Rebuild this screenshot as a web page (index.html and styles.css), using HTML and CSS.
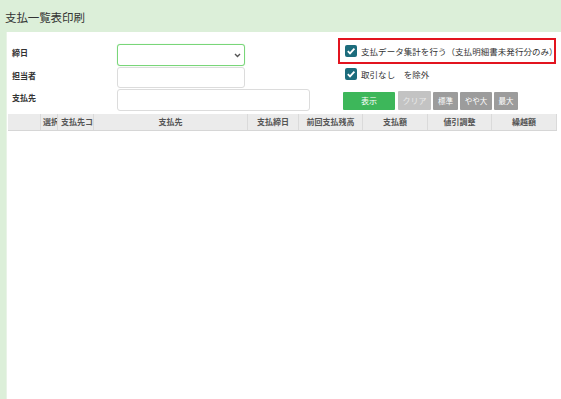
FILE: index.html
```html
<!DOCTYPE html>
<html lang="ja">
<head>
<meta charset="utf-8">
<title>支払一覧表印刷</title>
<link rel="stylesheet" href="styles.css">
</head>
<body>
<div class="page">
  <h1 class="title">支払一覧表印刷</h1>
  <div class="panel">
    <div class="top">
      <div class="form">
        <div class="row">
          <label class="lbl">締日</label>
          <div class="select">
            <svg class="chev" width="7" height="5" viewBox="0 0 7 5"><path d="M1 1 L3.5 3.5 L6 1" fill="none" stroke="#555" stroke-width="1.4"/></svg>
          </div>
        </div>
        <div class="row">
          <label class="lbl">担当者</label>
          <div class="input"></div>
        </div>
        <div class="row">
          <label class="lbl">支払先</label>
          <div class="input wide"></div>
        </div>
      </div>
      <div class="side">
        <div class="redbox">
          <div class="chk">
            <span class="box"><svg width="12" height="12" viewBox="0 0 12 12"><path d="M2.8 6.2 L5 8.4 L9.4 3.6" fill="none" stroke="#fff" stroke-width="1.8"/></svg></span>
            <span class="ctext">支払データ集計を行う（支払明細書未発行分のみ）</span>
          </div>
        </div>
        <div class="chk second">
          <span class="box"><svg width="12" height="12" viewBox="0 0 12 12"><path d="M2.8 6.2 L5 8.4 L9.4 3.6" fill="none" stroke="#fff" stroke-width="1.8"/></svg></span>
          <span class="ctext">取引なし　を除外</span>
        </div>
        <div class="buttons">
          <button class="btn show">表示</button>
          <button class="btn clear">クリア</button>
          <button class="btn size s1">標準</button>
          <button class="btn size s2">やや大</button>
          <button class="btn size s3">最大</button>
        </div>
      </div>
    </div>
    <div class="thead">
      <div class="th c0"></div>
      <div class="th c1 left">選択</div>
      <div class="th c2 left">支払先コード</div>
      <div class="th c3">支払先</div>
      <div class="th c4">支払締日</div>
      <div class="th c5">前回支払残高</div>
      <div class="th c6">支払額</div>
      <div class="th c7">値引調整</div>
      <div class="th c8">繰越額</div>
    </div>
  </div>
</div>
</body>
</html>
```
FILE: styles.css
```css
html, body {
  margin: 0;
  padding: 0;
  height: 100%;
}
body {
  background: #dcefd9;
  font-family: "Noto Sans CJK JP", "Noto Sans", sans-serif;
  color: #333;
}
.page {
  display: flex;
  flex-direction: column;
  height: 399px;
  overflow: hidden;
}
.title {
  margin: 0;
  height: 32px;
  box-sizing: border-box;
  padding: 10px 0 0 5px;
  font-size: 11.5px;
  font-weight: normal;
  line-height: 15px;
  color: #333;
  letter-spacing: -0.1px;
}
.panel {
  flex: 1;
  margin-left: 6px;
  background: #fff;
  border-left: 1px solid #e8f3e6;
}
.top {
  display: flex;
  height: 82px;
}
.form {
  width: 320px;
  padding-top: 12px;
  display: flex;
  flex-direction: column;
  gap: 1px;
}
.row {
  display: flex;
  align-items: center;
}
.lbl {
  width: 105px;
  padding-left: 5px;
  font-size: 8px;
  font-weight: bold;
  color: #333;
  align-self: flex-start;
  padding-top: 3px;
}
.select, .input {
  width: 128px;
  height: 21px;
  box-sizing: border-box;
  border: 1px solid #dcdcdc;
  border-radius: 3px;
  background: #fff;
  position: relative;
}
.select {
  height: 22px;
  border-color: #79d679;
  box-shadow: 0 0 1px #a8e8a8;
}
.chev {
  position: absolute;
  right: 3px;
  top: 8px;
}
.wide {
  width: 193px;
  height: 22px;
}
.side {
  padding-top: 6px;
  margin-left: 11px;
}
.redbox {
  width: 218px;
  height: 26px;
  box-sizing: border-box;
  border: 2px solid #e2141f;
  display: flex;
  align-items: center;
  padding-left: 5px;
}
.chk {
  display: flex;
  align-items: center;
  gap: 4px;
}
.chk.second {
  padding-left: 7px;
  margin-top: 3px;
  height: 13px;
}
.box {
  width: 12px;
  height: 12px;
  background: #1c6c7c;
  border-radius: 2px;
  display: flex;
}
.ctext {
  font-size: 8.5px;
  color: #333;
  white-space: nowrap;
  letter-spacing: 0.05px;
}
.buttons {
  display: flex;
  align-items: flex-end;
  margin-top: 11px;
  padding-left: 5px;
  gap: 2px;
}
.btn {
  border: none;
  margin: 0;
  padding: 0;
  font-family: "Noto Sans CJK JP", sans-serif;
  font-size: 8px;
  color: #fff;
  height: 18px;
  line-height: 18px;
  border-radius: 1px;
}
.show {
  width: 52px;
  background: #3db75a;
  margin-right: 1px;
}
.clear {
  width: 33px;
  height: 19px;
  background: #c3c3c3;
  color: #e9e9e9;
}
.size {
  background: #9c9c9c;
  font-size: 7.5px;
}
.s1 { width: 25px; }
.s2 { width: 32px; }
.s3 { width: 24px; }
.thead {
  display: flex;
  margin-left: 1px;
  margin-right: 4px;
  height: 16px;
  background: #ebebeb;
  border-bottom: 1px solid #d6d6d6;
}
.th {
  box-sizing: border-box;
  font-size: 8px;
  font-weight: bold;
  color: #555;
  line-height: 15px;
  text-align: center;
  border-right: 1px solid #dadada;
  white-space: nowrap;
  overflow: hidden;
}
.th.left {
  text-align: left;
  padding-left: 3px;
}
.c0 { width: 33px; }
.c1 { width: 17px; padding-left: 2px !important; }
.c2 { width: 36px; }
.c3 { width: 154px; }
.c4 { width: 51px; }
.c5 { width: 64px; }
.c6 { width: 65px; }
.c7 { width: 64px; }
.c8 { width: 65px; }
```
